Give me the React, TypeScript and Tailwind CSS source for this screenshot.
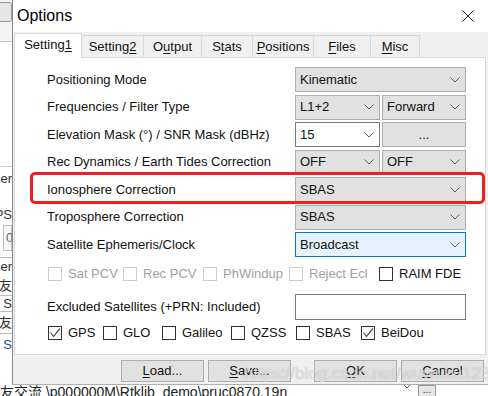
import React from "react";

const Chevron = () => (
  <svg width="10" height="6" viewBox="0 0 10 6" className="shrink-0">
    <path d="M0.5 0.5 L5 5 L9.5 0.5" fill="none" stroke="#606060" strokeWidth="1" />
  </svg>
);

const Check = () => (
  <svg width="12" height="12" viewBox="0 0 12 12">
    <path d="M1.5 5.5 L4.5 9.5 L11 1.5" fill="none" stroke="#555" strokeWidth="1.2" />
  </svg>
);

function Select({ text, className = "" }: { text: string; className?: string }) {
  return (
    <div
      className={`h-full flex items-center justify-between pl-[4px] pr-[5px] border ${
        className || "bg-[#e1e1e1] border-[#adadad]"
      }`}
    >
      <span>{text}</span>
      <Chevron />
    </div>
  );
}

function Box({
  label,
  width,
  checked = false,
  disabled = false,
}: {
  label: string;
  width?: number;
  checked?: boolean;
  disabled?: boolean;
}) {
  return (
    <div className="flex items-center gap-[6px] whitespace-nowrap" style={width ? { width } : undefined}>
      <div
        className={`w-[14px] h-[14px] bg-white border flex items-center justify-center ${
          disabled ? "border-[#cccccc]" : "border-[#333333]"
        }`}
      >
        {checked && <Check />}
      </div>
      <span className={disabled ? "text-[#a0a0a0]" : "text-[#111]"}>{label}</span>
    </div>
  );
}

function Row({ label, children }: { label: string; children: React.ReactNode }) {
  return (
    <div className="grid grid-cols-[280px_171px] h-[25px] items-center">
      <span className="pl-[32px] whitespace-nowrap">{label}</span>
      <div className="h-full">{children}</div>
    </div>
  );
}

const tabs = [
  { pre: "Setting", u: "1", post: "", w: 68, active: true },
  { pre: "Setting", u: "2", post: "", w: 63 },
  { pre: "O", u: "u", post: "tput", w: 59 },
  { pre: "S", u: "t", post: "ats", w: 52 },
  { pre: "", u: "P", post: "ositions", w: 62 },
  { pre: "", u: "F", post: "iles", w: 58 },
  { pre: "", u: "M", post: "isc", w: 50 },
];

function Btn({ u, rest }: { u: string; rest: string }) {
  return (
    <div className="w-[83px] h-[22px] bg-[#e1e1e1] border border-[#adadad] flex items-center justify-center">
      <span>
        <u className="underline-offset-2">{u}</u>
        {rest}
      </span>
    </div>
  );
}

export default function App() {
  return (
    <div
      className="w-[488px] h-[396px] relative overflow-hidden bg-[#f0f0f0] text-[13px] text-[#111]"
      style={{ fontFamily: '"Liberation Sans", "Noto Sans CJK SC", sans-serif' }}
    >
      <div className="flex h-[385px]">
        {/* window behind */}
        <div className="w-[12px] overflow-hidden flex flex-col bg-white text-[13px] text-[#333]">
          <div className="h-[42px] bg-[#f3f3f3] border-b border-[#c8c8c8] pt-[2px]">
            <div className="w-[14px] h-[20px] -ml-[2px] border border-[#9a9a9a] rounded-[3px] bg-[#e6e6e6]" />
          </div>
          <div className="h-[125px] border-b border-[#d0d0d0]" />
          <div className="h-[24px] flex justify-end items-center whitespace-nowrap">User</div>
          <div className="h-[16px]" />
          <div className="h-[16px] flex justify-end items-center whitespace-nowrap">GPS</div>
          <div className="h-[26px] mt-[2px] border border-[#c0c0c0] bg-[#f7f7f7] ml-[3px] flex items-center pl-[2px] text-[#666]">0</div>
          <div className="h-[7px] border-b border-[#bbb]" />
          <div className="h-[18px] flex justify-end items-center whitespace-nowrap">User</div>
          <div className="h-[20px] flex justify-end items-center whitespace-nowrap border-b border-[#bbb]">友</div>
          <div className="h-[16px] flex justify-end items-center whitespace-nowrap border-b border-[#bbb]">e S</div>
          <div className="h-[22px] flex justify-end items-center whitespace-nowrap border-b border-[#bbb]">友</div>
          <div className="h-[22px] flex justify-end items-center whitespace-nowrap text-[#2a4d8a]">r, S</div>
        </div>

        {/* dialog */}
        <div className="w-[476px] flex flex-col border-l border-[#8a8a8a] border-b border-b-[#b0b0b0] bg-[#f0f0f0]">
          <div className="h-[32px] bg-white flex items-center justify-between pl-[4px] pr-[14px]">
            <span className="text-[16px] text-black">Options</span>
            <svg width="12" height="12" viewBox="0 0 12 12">
              <path d="M0.5 0.5 L11.5 11.5 M11.5 0.5 L0.5 11.5" stroke="#222" strokeWidth="1" />
            </svg>
          </div>

          <div className="flex items-end h-[25px] pl-[1px]">
            {tabs.map((t) => (
              <div
                key={t.pre + t.u}
                className={`flex items-center justify-center border border-b-0 ${
                  t.active
                    ? "h-[25px] bg-white border-[#d9d9d9] relative z-10 -mb-[1px] pb-[2px]"
                    : "h-[22px] bg-[#f0f0f0] border-[#d9d9d9] -ml-[1px]"
                }`}
                style={{ width: t.w }}
              >
                <span>
                  {t.pre}
                  <u className="underline-offset-2">{t.u}</u>
                  {t.post}
                </span>
              </div>
            ))}
          </div>

          <div className="ml-[1px] w-[472px] h-[298px] bg-white border border-[#d9d9d9] relative flex flex-col pt-[9px]">
            <div className="flex flex-col gap-[2.5px]">
              <Row label="Positioning Mode">
                <Select text="Kinematic" />
              </Row>
              <Row label="Frequencies / Filter Type">
                <div className="grid grid-cols-[85px_84px] gap-[2px] h-full">
                  <Select text="L1+2" />
                  <Select text="Forward" />
                </div>
              </Row>
              <Row label="Elevation Mask (°) / SNR Mask (dBHz)">
                <div className="grid grid-cols-[85px_84px] gap-[2px] h-full">
                  <Select text="15" className="bg-white border-[#7a7a7a]" />
                  <div className="h-full bg-[#e1e1e1] border border-[#adadad] flex items-center justify-center">...</div>
                </div>
              </Row>
              <Row label="Rec Dynamics / Earth Tides Correction">
                <div className="grid grid-cols-[85px_84px] gap-[2px] h-full">
                  <Select text="OFF" />
                  <Select text="OFF" />
                </div>
              </Row>
              <Row label="Ionosphere Correction">
                <Select text="SBAS" />
              </Row>
              <Row label="Troposphere Correction">
                <Select text="SBAS" />
              </Row>
              <Row label="Satellite Ephemeris/Clock">
                <Select text="Broadcast" className="bg-[#e5f1fb] border-[#0078d7]" />
              </Row>
            </div>

            <div className="flex items-center h-[14px] mt-[10px] pl-[33px]">
              <Box label="Sat PCV" width={75} disabled />
              <Box label="Rec PCV" width={80} disabled />
              <Box label="PhWindup" width={86} disabled />
              <Box label="Reject Ecl" width={90} disabled />
              <Box label="RAIM FDE" />
            </div>

            <div className="grid grid-cols-[280px_171px] h-[26px] mt-[13px] items-center">
              <span className="pl-[32px] whitespace-nowrap">Excluded Satellites (+PRN: Included)</span>
              <div className="h-full bg-white border border-[#7a7a7a]" />
            </div>

            <div className="flex items-center h-[14px] mt-[6px] pl-[33px]">
              <Box label="GPS" width={55} checked />
              <Box label="GLO" width={59} />
              <Box label="Galileo" width={69} />
              <Box label="QZSS" width={65} />
              <Box label="SBAS" width={65} />
              <Box label="BeiDou" checked />
            </div>

            {/* highlight */}
            <div className="absolute left-[15px] top-[114px] w-[455px] h-[32px] border-[3px] border-[#f01e1e] rounded-[5px]" />
          </div>

          <div className="flex pt-[5px] pl-[108px] gap-[4px]">
            <Btn u="L" rest="oad..." />
            <Btn u="S" rest="ave..." />
            <div className="w-[15px]" />
            <Btn u="O" rest="K" />
            <Btn u="C" rest="ancel" />
          </div>
        </div>
      </div>

      {/* window behind, bottom */}
      <div className="h-[11px] overflow-hidden flex items-start bg-white">
        <span className="whitespace-nowrap -mt-[3px] text-[14px] text-[#222] w-[400px]">
          友交流 \p000000M\Rtklib_demo\pruc0870.19n
        </span>
        <div className="ml-[2px] -mt-[2px]">
          <Chevron />
        </div>
        <div className="ml-[6px] w-[18px] h-[12px] border border-[#999] bg-[#e6e6e6] flex justify-center text-[10px] leading-[8px]">
          ...
        </div>
      </div>

      {/* watermark */}
      <div
        className="absolute left-[244px] top-[361px] text-[17px] whitespace-nowrap text-white/60"
        style={{ textShadow: "0 0 1px rgba(120,120,120,0.6)" }}
      >
        https://blog.csdn.net/wuwuku123
      </div>
    </div>
  );
}
